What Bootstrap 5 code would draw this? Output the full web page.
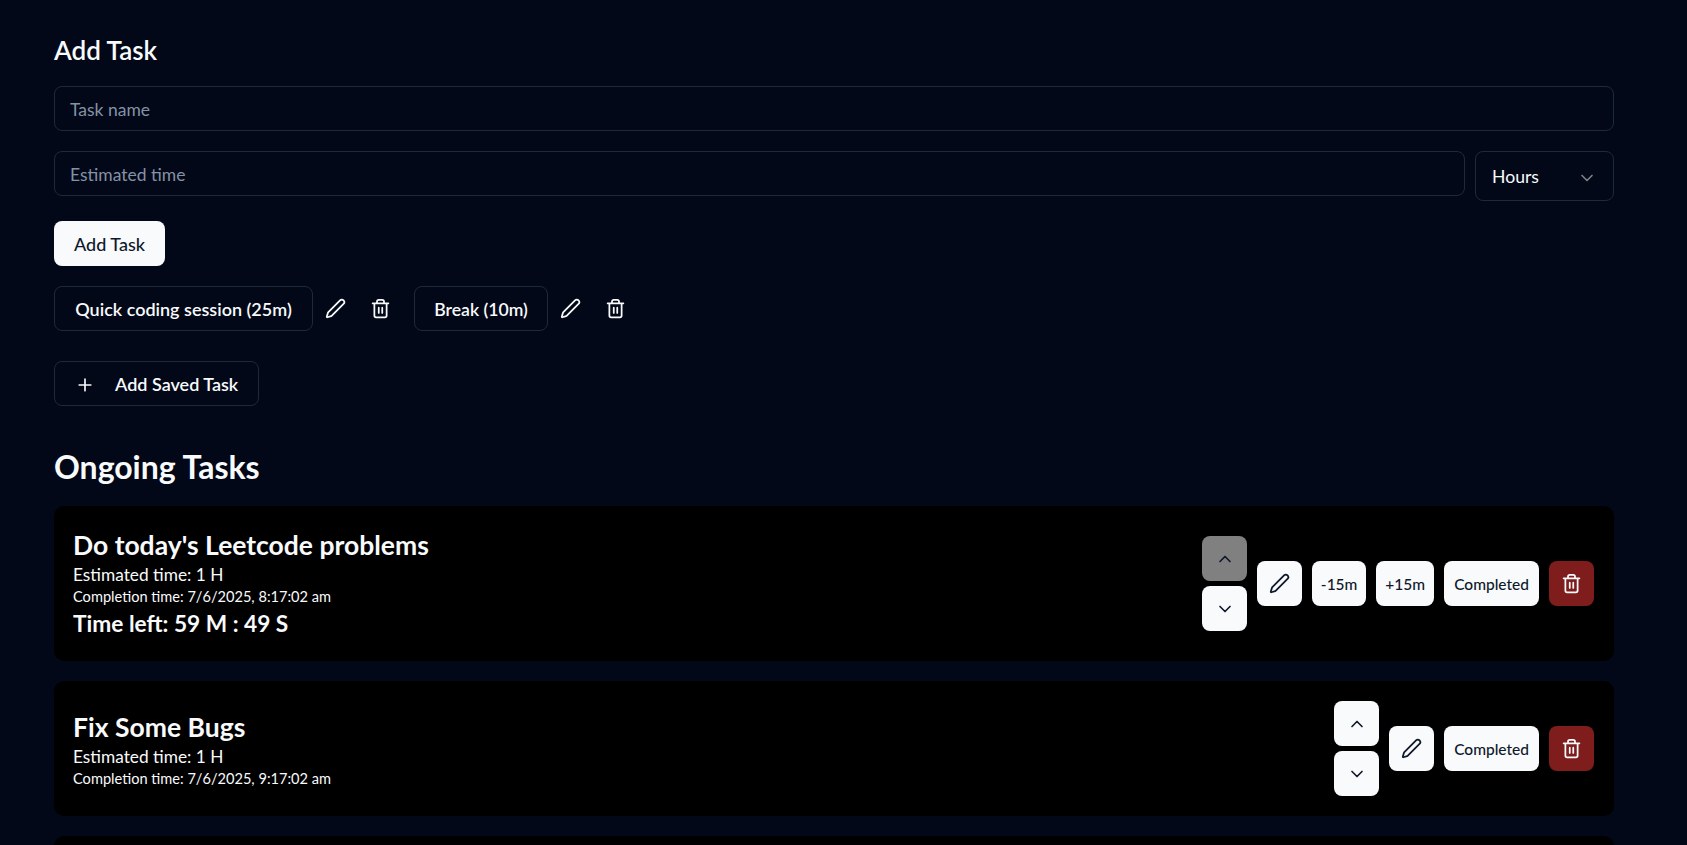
<!DOCTYPE html>
<html lang="en">
<head>
    <meta charset="UTF-8">
    <meta name="viewport" content="width=device-width, initial-scale=1">
    <title>Tasks</title>
    <link href="https://cdn.jsdelivr.net/npm/bootstrap@5.3.0/dist/css/bootstrap.min.css" rel="stylesheet">
    <style>
        html, body { height: 100%; overflow: hidden; }
        body { background: #020817; color: #f8fafc; font-family: Lato, "Open Sans", sans-serif; padding: 30px 73px 0 54px; }
        .add-title { font-size: 26px; font-weight: 600; line-height: 32px; margin: 4px 0 20px; }
        .task-input { height: 45px; background: transparent; border: 1px solid #1e293b; border-radius: 8px; color: #f8fafc; padding: 2px 15px 0; font-size: 17.5px; }
        .task-input::placeholder { color: #8492a6; }
        .task-input:focus { background: transparent; color: #f8fafc; border-color: #1e293b; box-shadow: none; }
        .first-input { margin-bottom: 20px; }
        .time-row { gap: 10px; margin-bottom: 20px; }
        .unit-select { width: 139px; height: 50px; border: 1px solid #1e293b; border-radius: 8px; padding: 3px 16px 0; font-size: 17.6px; }
        .white-btn { height: 45px; background: #f8fafc; color: #0f172a; border: 0; border-radius: 8px; font-weight: 500; display: inline-flex; align-items: center; justify-content: center; padding: 2px 10px 0; font-size: 15.5px; }
        .white-btn:disabled { background: #808080; color: #0f172a; opacity: 1; }
        .white-btn.main-btn { font-size: 18px; width: 111px; margin-bottom: 20px; }
        .icon-btn { width: 45px; padding: 0; }
        .minus-btn { width: 54px; padding-left: 0; padding-right: 0; }
        .plus-btn { width: 58px; padding-left: 0; padding-right: 0; }
        .del-btn { background: #7f1d1d; color: #f8fafc; }
        .outline-chip { height: 45px; background: transparent; border: 1px solid #1e293b; border-radius: 8px; color: #f8fafc; font-weight: 600; font-size: 18px; display: inline-flex; align-items: center; justify-content: center; padding: 2px 20px 0; }
        .chip-wide { width: 259px; }
        .chip-short { width: 134px; padding: 3px 0 0; font-size: 17.6px; }
        .chip-row { gap: 11px; margin-bottom: 30px; }
        .plus-chip { gap: 20px; }
        .bare-icon { background: none; border: 0; padding: 0; color: #f8fafc; width: 45px; height: 45px; display: inline-flex; align-items: center; justify-content: center; }
        .ongoing-title { font-size: 32px; font-weight: 700; line-height: 36px; margin: 43px 0 21px; }
        .task-row { background: #000; border-radius: 10px; padding: 20px; margin-bottom: 20px; }
        .task-text { padding-top: 1px; margin-left: -1px; }
        .task-name { font-size: 26.5px; font-weight: 700; line-height: 36px; margin: 0; }
        .task-est { font-size: 17.3px; line-height: 24px; }
        .task-done { font-size: 14.6px; line-height: 20px; }
        .task-left { font-size: 22.7px; font-weight: 700; line-height: 34px; }
        .action-row { gap: 10px; }
        .arrow-stack { gap: 5px; }
        .empty-row { height: 134px; }
        svg.lu { fill: none; stroke: currentColor; stroke-width: 2; stroke-linecap: round; stroke-linejoin: round; }
        svg.dim { color: #7d8088; }
    </style>
</head>
<body>
    <h2 class="add-title">Add Task</h2>
    <input class="form-control task-input first-input" placeholder="Task name">
    <div class="d-flex align-items-start time-row">
        <input class="form-control task-input flex-grow-1" placeholder="Estimated time">
        <div class="unit-select d-flex align-items-center justify-content-between flex-shrink-0">
            <span>Hours</span>
            <svg class="lu dim" width="20" height="20" viewBox="0 0 24 24"><path d="m6 9 6 6 6-6"/></svg>
        </div>
    </div>
    <button class="white-btn main-btn">Add Task</button>
    <div class="d-flex align-items-center chip-row">
        <div class="d-flex align-items-center">
            <span class="outline-chip chip-wide">Quick coding session (25m)</span>
            <button class="bare-icon"><svg class="lu" width="21" height="21" viewBox="0 0 24 24"><path d="M21.174 6.812a1 1 0 0 0-3.986-3.987L3.842 16.174a2 2 0 0 0-.5.83l-1.321 4.352a.5.5 0 0 0 .623.622l4.353-1.32a2 2 0 0 0 .83-.497z"/></svg></button>
            <button class="bare-icon"><svg class="lu" width="21" height="21" viewBox="0 0 24 24"><path d="M3 6h18M19 6v14c0 1-1 2-2 2H7c-1 0-2-1-2-2V6M8 6V4c0-1 1-2 2-2h4c1 0 2 1 2 2v2M10 11v6M14 11v6"/></svg></button>
        </div>
        <div class="d-flex align-items-center">
            <span class="outline-chip chip-short">Break (10m)</span>
            <button class="bare-icon"><svg class="lu" width="21" height="21" viewBox="0 0 24 24"><path d="M21.174 6.812a1 1 0 0 0-3.986-3.987L3.842 16.174a2 2 0 0 0-.5.83l-1.321 4.352a.5.5 0 0 0 .623.622l4.353-1.32a2 2 0 0 0 .83-.497z"/></svg></button>
            <button class="bare-icon"><svg class="lu" width="21" height="21" viewBox="0 0 24 24"><path d="M3 6h18M19 6v14c0 1-1 2-2 2H7c-1 0-2-1-2-2V6M8 6V4c0-1 1-2 2-2h4c1 0 2 1 2 2v2M10 11v6M14 11v6"/></svg></button>
        </div>
    </div>
    <button class="outline-chip plus-chip"><svg class="lu" width="20" height="20" viewBox="0 0 24 24"><path d="M5 12h14M12 5v14"/></svg>Add Saved Task</button>
    <h2 class="ongoing-title">Ongoing Tasks</h2>
    <div class="task-row d-flex justify-content-between align-items-center">
        <div class="task-text">
            <h3 class="task-name">Do today's Leetcode problems</h3>
            <div class="task-est">Estimated time: 1 H</div>
            <div class="task-done">Completion time: 7/6/2025, 8:17:02 am</div>
            <div class="task-left">Time left: 59 M : 49 S</div>
        </div>
        <div class="d-flex align-items-center action-row">
            <div class="d-flex flex-column arrow-stack">
                <button class="white-btn icon-btn" disabled><svg class="lu" width="20" height="20" viewBox="0 0 24 24"><path d="m18 15-6-6-6 6"/></svg></button>
                <button class="white-btn icon-btn"><svg class="lu" width="20" height="20" viewBox="0 0 24 24"><path d="m6 9 6 6 6-6"/></svg></button>
            </div>
            <button class="white-btn icon-btn"><svg class="lu" width="21" height="21" viewBox="0 0 24 24"><path d="M21.174 6.812a1 1 0 0 0-3.986-3.987L3.842 16.174a2 2 0 0 0-.5.83l-1.321 4.352a.5.5 0 0 0 .623.622l4.353-1.32a2 2 0 0 0 .83-.497z"/></svg></button>
            <button class="white-btn minus-btn">-15m</button>
            <button class="white-btn plus-btn">+15m</button>
            <button class="white-btn">Completed</button>
            <button class="white-btn icon-btn del-btn"><svg class="lu" width="21" height="21" viewBox="0 0 24 24"><path d="M3 6h18M19 6v14c0 1-1 2-2 2H7c-1 0-2-1-2-2V6M8 6V4c0-1 1-2 2-2h4c1 0 2 1 2 2v2M10 11v6M14 11v6"/></svg></button>
        </div>
    </div>
    <div class="task-row d-flex justify-content-between align-items-center">
        <div class="task-text">
            <h3 class="task-name">Fix Some Bugs</h3>
            <div class="task-est">Estimated time: 1 H</div>
            <div class="task-done">Completion time: 7/6/2025, 9:17:02 am</div>
        </div>
        <div class="d-flex align-items-center action-row">
            <div class="d-flex flex-column arrow-stack">
                <button class="white-btn icon-btn"><svg class="lu" width="20" height="20" viewBox="0 0 24 24"><path d="m18 15-6-6-6 6"/></svg></button>
                <button class="white-btn icon-btn"><svg class="lu" width="20" height="20" viewBox="0 0 24 24"><path d="m6 9 6 6 6-6"/></svg></button>
            </div>
            <button class="white-btn icon-btn"><svg class="lu" width="21" height="21" viewBox="0 0 24 24"><path d="M21.174 6.812a1 1 0 0 0-3.986-3.987L3.842 16.174a2 2 0 0 0-.5.83l-1.321 4.352a.5.5 0 0 0 .623.622l4.353-1.32a2 2 0 0 0 .83-.497z"/></svg></button>
            <button class="white-btn">Completed</button>
            <button class="white-btn icon-btn del-btn"><svg class="lu" width="21" height="21" viewBox="0 0 24 24"><path d="M3 6h18M19 6v14c0 1-1 2-2 2H7c-1 0-2-1-2-2V6M8 6V4c0-1 1-2 2-2h4c1 0 2 1 2 2v2M10 11v6M14 11v6"/></svg></button>
        </div>
    </div>
    <div class="task-row empty-row"></div>
    <script src="https://cdn.jsdelivr.net/npm/bootstrap@5.3.0/dist/js/bootstrap.bundle.min.js"></script>
</body>
</html>
